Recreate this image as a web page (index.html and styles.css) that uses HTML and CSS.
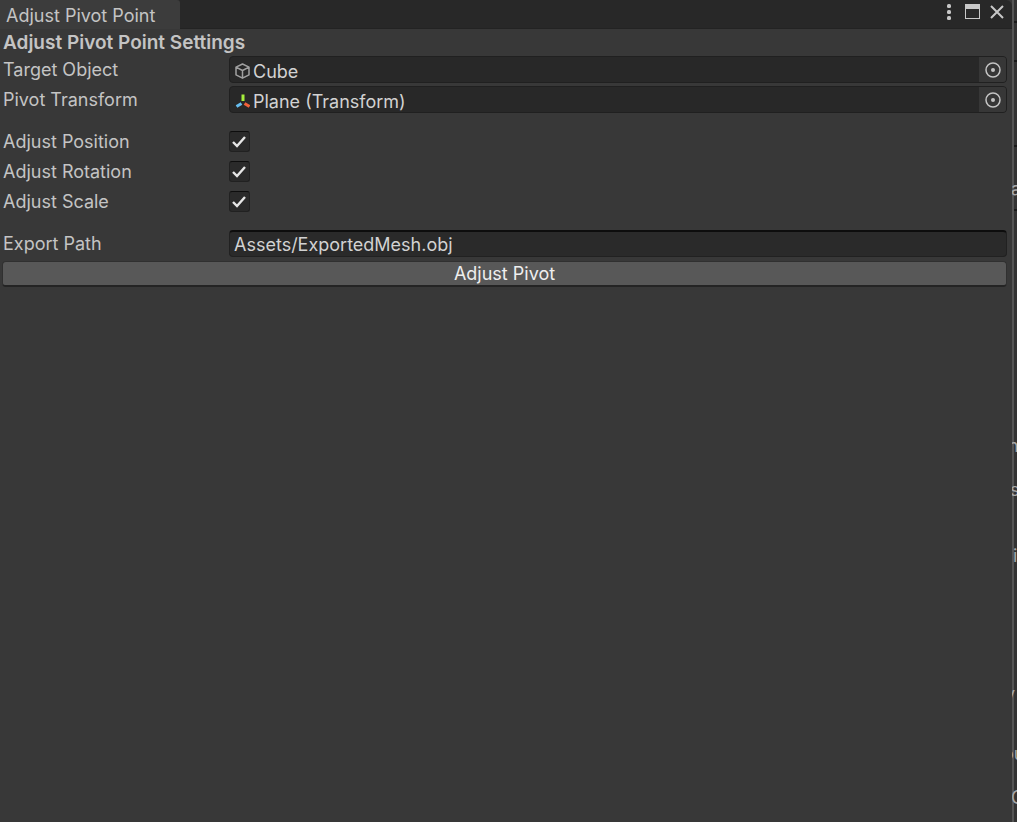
FILE: index.html
```html
<!DOCTYPE html>
<html lang="en">
<head>
    <meta charset="UTF-8">
    <meta name="viewport" content="width=device-width, initial-scale=1.0">
    <title>Adjust Pivot Point</title>
    <link rel="stylesheet" href="styles.css">
</head>
<body>
    <main class="window">
        <header class="tabbar">
            <div class="tab">Adjust Pivot Point</div>
            <div class="window-buttons">
                <button type="button" aria-label="Menu">
                    <svg width="16" height="18" viewBox="0 0 16 18" fill="#c8c8c8"><rect x="6" y="1" width="4" height="4" rx="1.500"/><rect x="6" y="7" width="4" height="4" rx="1.500"/><rect x="6" y="13" width="4" height="4" rx="1.500"/></svg>
                </button>
                <button type="button" aria-label="Maximize">
                    <svg width="16" height="18" viewBox="0 0 16 18"><path fill="#c8c8c8" fill-rule="evenodd" d="M0 1h15v15H0zM1 6v9h13V6z"/></svg>
                </button>
                <button type="button" aria-label="Close">
                    <svg width="16" height="18" viewBox="0 0 16 18"><path d="M2 3l12 12M14 3L2 15" stroke="#c8c8c8" stroke-width="2"/></svg>
                </button>
            </div>
        </header>

        <form class="settings">
            <h1>Adjust Pivot Point Settings</h1>
            <div class="row">
                <label for="target">Target Object</label>
                <div class="object-field">
                    <svg class="type-icon" width="16" height="18" viewBox="0 0 16 18" fill="none" stroke="#a0a0a0" stroke-width="1.5" stroke-linejoin="round"><path d="M8.500 2l6.500 3.200v7.600l-6.500 3.400L2 12.800V5.200zM2 5.200l6.500 3.300L15 5.200M8.500 8.500v7.700"/></svg>
                    <input type="text" id="target" value="Cube" readonly>
                    <button type="button" class="picker" aria-label="Select target object">
                        <svg width="16" height="17" viewBox="0 0 16 17"><circle cx="8" cy="9" r="7" fill="none" stroke="#c4c4c4" stroke-width="1.500"/><circle cx="8" cy="9" r="2" fill="#c4c4c4"/></svg>
                    </button>
                </div>
            </div>
            <div class="row">
                <label for="pivot">Pivot Transform</label>
                <div class="object-field">
                    <svg class="type-icon" width="16" height="18" viewBox="0 0 16 18" fill="none" stroke-width="3"><path d="M9 2.500v6.500" stroke="#a5ee3c"/><path d="M7.500 11.500l-5 3" stroke="#65bdf0"/><path d="M10.500 11.500l5 3" stroke="#f2623a"/></svg>
                    <input type="text" id="pivot" value="Plane (Transform)" readonly>
                    <button type="button" class="picker" aria-label="Select pivot transform">
                        <svg width="16" height="17" viewBox="0 0 16 17"><circle cx="8" cy="9" r="7" fill="none" stroke="#c4c4c4" stroke-width="1.500"/><circle cx="8" cy="9" r="2" fill="#c4c4c4"/></svg>
                    </button>
                </div>
            </div>

            <div class="row spaced">
                <label for="position">Adjust Position</label>
                <span class="toggle">
                    <input type="checkbox" id="position" checked>
                    <svg class="tick" viewBox="0 0 21 21"><path d="M4 11l4 4 8-9"/></svg>
                </span>
            </div>
            <div class="row">
                <label for="rotation">Adjust Rotation</label>
                <span class="toggle">
                    <input type="checkbox" id="rotation" checked>
                    <svg class="tick" viewBox="0 0 21 21"><path d="M4 11l4 4 8-9"/></svg>
                </span>
            </div>
            <div class="row">
                <label for="scale">Adjust Scale</label>
                <span class="toggle">
                    <input type="checkbox" id="scale" checked>
                    <svg class="tick" viewBox="0 0 21 21"><path d="M4 11l4 4 8-9"/></svg>
                </span>
            </div>

            <div class="row spaced">
                <label for="path">Export Path</label>
                <input type="text" class="text-field" id="path" value="Assets/ExportedMesh.obj">
            </div>
            <button type="button" class="submit">Adjust Pivot</button>
        </form>
    </main>

    <!-- edge of the editor panel behind the window -->
    <aside class="behind" aria-hidden="true">
        <i class="line line-1"></i>
        <i class="line line-2"></i>
        <i class="line line-3"></i>
        <i class="line line-4"></i>
        <span class="bit bit-1">a</span>
        <span class="bit bit-2">n</span>
        <span class="bit bit-3">s</span>
        <span class="bit bit-4">i</span>
        <span class="bit bit-5">y</span>
        <span class="bit bit-6">ou</span>
        <span class="bit bit-7">C</span>
    </aside>
</body>
</html>
```
FILE: styles.css
```css
* {
    box-sizing: border-box;
}
body {
    margin: 0;
    min-height: 100vh;
    display: flex;
    background: #333333;
    color: #c4c4c4;
    font-family: Inter, sans-serif;
    font-size: 18px;
    line-height: 26px;
}
button, input {
    font: inherit;
    color: inherit;
    margin: 0;
    padding: 0;
    border: none;
    background: none;
    outline: none;
}
svg {
    display: block;
    flex: none;
}
.window {
    flex: 1;
    min-width: 0;
    background: #383838;
}
.tabbar {
    display: flex;
    justify-content: space-between;
    height: 29px;
    background: #282828;
    border-bottom: 1px solid #232323;
    border-top-right-radius: 6px;
}
.tab {
    height: 29px;
    padding: 3px 25px 0 6px;
    background: #3c3c3c;
    border-top-right-radius: 3px;
    white-space: nowrap;
}
.window-buttons {
    display: flex;
    align-items: flex-start;
    gap: 8px;
    padding: 3px 7px 0 0;
}
.settings {
    padding: 1px 5px 0 2px;
}
h1 {
    margin: 0 0 0 1px;
    font-size: 19px;
    line-height: 26px;
    font-weight: 600;
}
.row {
    display: flex;
    align-items: center;
    height: 27px;
    margin-bottom: 3px;
}
.spaced {
    margin-top: 15px;
}
.row label {
    flex: none;
    align-self: flex-end;
    width: 227px;
    padding-left: 1px;
}
.object-field {
    flex: 1;
    display: flex;
    align-items: center;
    height: 27px;
    padding-left: 4px;
    background: #282828;
    border: 1px solid #202020;
    border-radius: 4px;
    overflow: hidden;
}
.object-field input {
    flex: 1;
    min-width: 0;
    padding: 4px 0 0 3px;
    color: #d2d2d2;
}
.type-icon {
    margin-top: 2px;
}
.picker {
    display: flex;
    align-items: center;
    justify-content: center;
    width: 27px;
    height: 25px;
    background: #373737;
}
.toggle {
    position: relative;
    width: 21px;
    height: 21px;
}
.toggle input {
    appearance: none;
    display: block;
    width: 21px;
    height: 21px;
    background: #2a2a2a;
    border: 1px solid #212121;
    border-top-color: #0d0d0d;
    border-radius: 3px;
}
.tick {
    position: absolute;
    inset: 0;
    fill: none;
    stroke: #e6e6e6;
    stroke-width: 2.4;
    pointer-events: none;
}
.toggle input:not(:checked) + .tick {
    display: none;
}
.text-field {
    flex: 1;
    min-width: 0;
    height: 27px;
    padding: 0 4px;
    background: #2a2a2a;
    border: 1px solid #212121;
    border-top: 2px solid #0d0d0d;
    border-radius: 4px;
    color: #d2d2d2;
}
.submit {
    display: block;
    width: 100%;
    height: 26px;
    margin-top: 4px;
    line-height: 24px;
    background: #585858;
    border: 1px solid #303030;
    border-bottom: 2px solid #242424;
    border-radius: 4px;
    color: #eeeeee;
}
.behind {
    position: relative;
    flex: none;
    width: 5px;
    border-left: 2px solid #555555;
    overflow: clip;
    overflow-clip-margin: border-box;
    color: #a8a8a8;
}
.line {
    position: absolute;
    left: 0;
    width: 3px;
    height: 2px;
    background: #1a1a1a;
}
.line-1 { top: 21px; }
.line-2 { top: 60px; }
.line-3 { top: 145px; }
.line-4 { top: 209px; }
.bit {
    position: absolute;
    left: -3px;
}
.bit-1 { top: 176px; }
.bit-2 { top: 433px; left: -6px; }
.bit-3 { top: 477px; left: -4px; }
.bit-4 { top: 543px; left: -1px; }
.bit-5 { top: 681px; left: -9px; }
.bit-6 { top: 741px; left: -11px; }
.bit-7 { top: 785px; }
```
